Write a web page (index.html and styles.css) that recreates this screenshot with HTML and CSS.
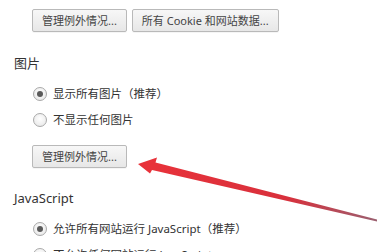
FILE: index.html
```html
<!DOCTYPE html>
<html lang="zh-CN">
<head>
<meta charset="utf-8">
<title>内容设置</title>
<link rel="stylesheet" href="styles.css">
</head>
<body>
<div class="page">
  <div class="btn-row">
    <button class="btn">管理例外情况...</button>
    <button class="btn">所有 Cookie 和网站数据...</button>
  </div>

  <section class="section">
    <h3 class="title">图片</h3>
    <div class="options">
      <label class="radio"><span class="circle checked"></span><span>显示所有图片（推荐）</span></label>
      <label class="radio"><span class="circle"></span><span>不显示任何图片</span></label>
    </div>
    <button class="btn btn-indent">管理例外情况...</button>
  </section>

  <section class="section section-js">
    <h3 class="title">JavaScript</h3>
    <div class="options">
      <label class="radio"><span class="circle checked"></span><span>允许所有网站运行 JavaScript（推荐）</span></label>
      <label class="radio"><span class="circle"></span><span>不允许任何网站运行 JavaScript</span></label>
    </div>
  </section>

  <svg class="arrow" width="377" height="252" viewBox="0 0 377 252" aria-hidden="true">
    <defs>
      <linearGradient id="shaft" x1="150" y1="165" x2="377" y2="222" gradientUnits="userSpaceOnUse">
        <stop offset="0" stop-color="#e8323a"/>
        <stop offset="0.6" stop-color="#d8303c"/>
        <stop offset="1" stop-color="#9a6070"/>
      </linearGradient>
    </defs>
    <polygon fill="url(#shaft)" points="138,164 157,157.5 155.5,162.5 377,219.5 377,221.5 152,170 150,173.5"/>
  </svg>
</div>
</body>
</html>
```

FILE: styles.css
```css
html, body {
  margin: 0;
  padding: 0;
  background: #ffffff;
}

body {
  font-family: "Noto Sans", "Noto Sans CJK SC", sans-serif;
  color: #333333;
  font-size: 11.5px;
}

.page {
  position: relative;
  width: 377px;
  height: 252px;
  overflow: hidden;
  padding-top: 9px;
  box-sizing: border-box;
}

.btn-row {
  display: flex;
  gap: 5px;
  padding-left: 32px;
}

.btn {
  height: 23px;
  padding: 0 9px;
  border: 1px solid #b9b9b9;
  border-radius: 2px;
  background: linear-gradient(#f7f7f7, #e7e7e7);
  color: #444444;
  font-family: "Noto Sans", "Noto Sans CJK SC", sans-serif;
  font-size: 11px;
  line-height: 21px;
  box-shadow: 0 1px 0 rgba(0, 0, 0, 0.04);
}

.section {
  padding-left: 14px;
  margin-top: 23px;
}

.section-js {
  margin-top: 22px;
}

.title {
  margin: 0 0 10px;
  font-size: 13px;
  font-weight: normal;
  line-height: 16px;
  color: #333333;
}

.options {
  display: flex;
  flex-direction: column;
  padding-left: 19px;
}

.radio {
  display: flex;
  align-items: center;
  gap: 6px;
  height: 26px;
  line-height: 16px;
}

.circle {
  width: 12px;
  height: 12px;
  border: 1px solid #a9a9a9;
  border-radius: 50%;
  background: radial-gradient(circle at 50% 40%, #ffffff, #e4e4e4);
  display: flex;
  align-items: center;
  justify-content: center;
  flex: none;
}

.circle.checked::after {
  content: "";
  width: 6px;
  height: 6px;
  border-radius: 50%;
  background: #5a5a5a;
}

.btn-indent {
  margin-left: 18px;
  margin-top: 12px;
}

.arrow {
  position: absolute;
  left: 0;
  top: 0;
  pointer-events: none;
}
```
